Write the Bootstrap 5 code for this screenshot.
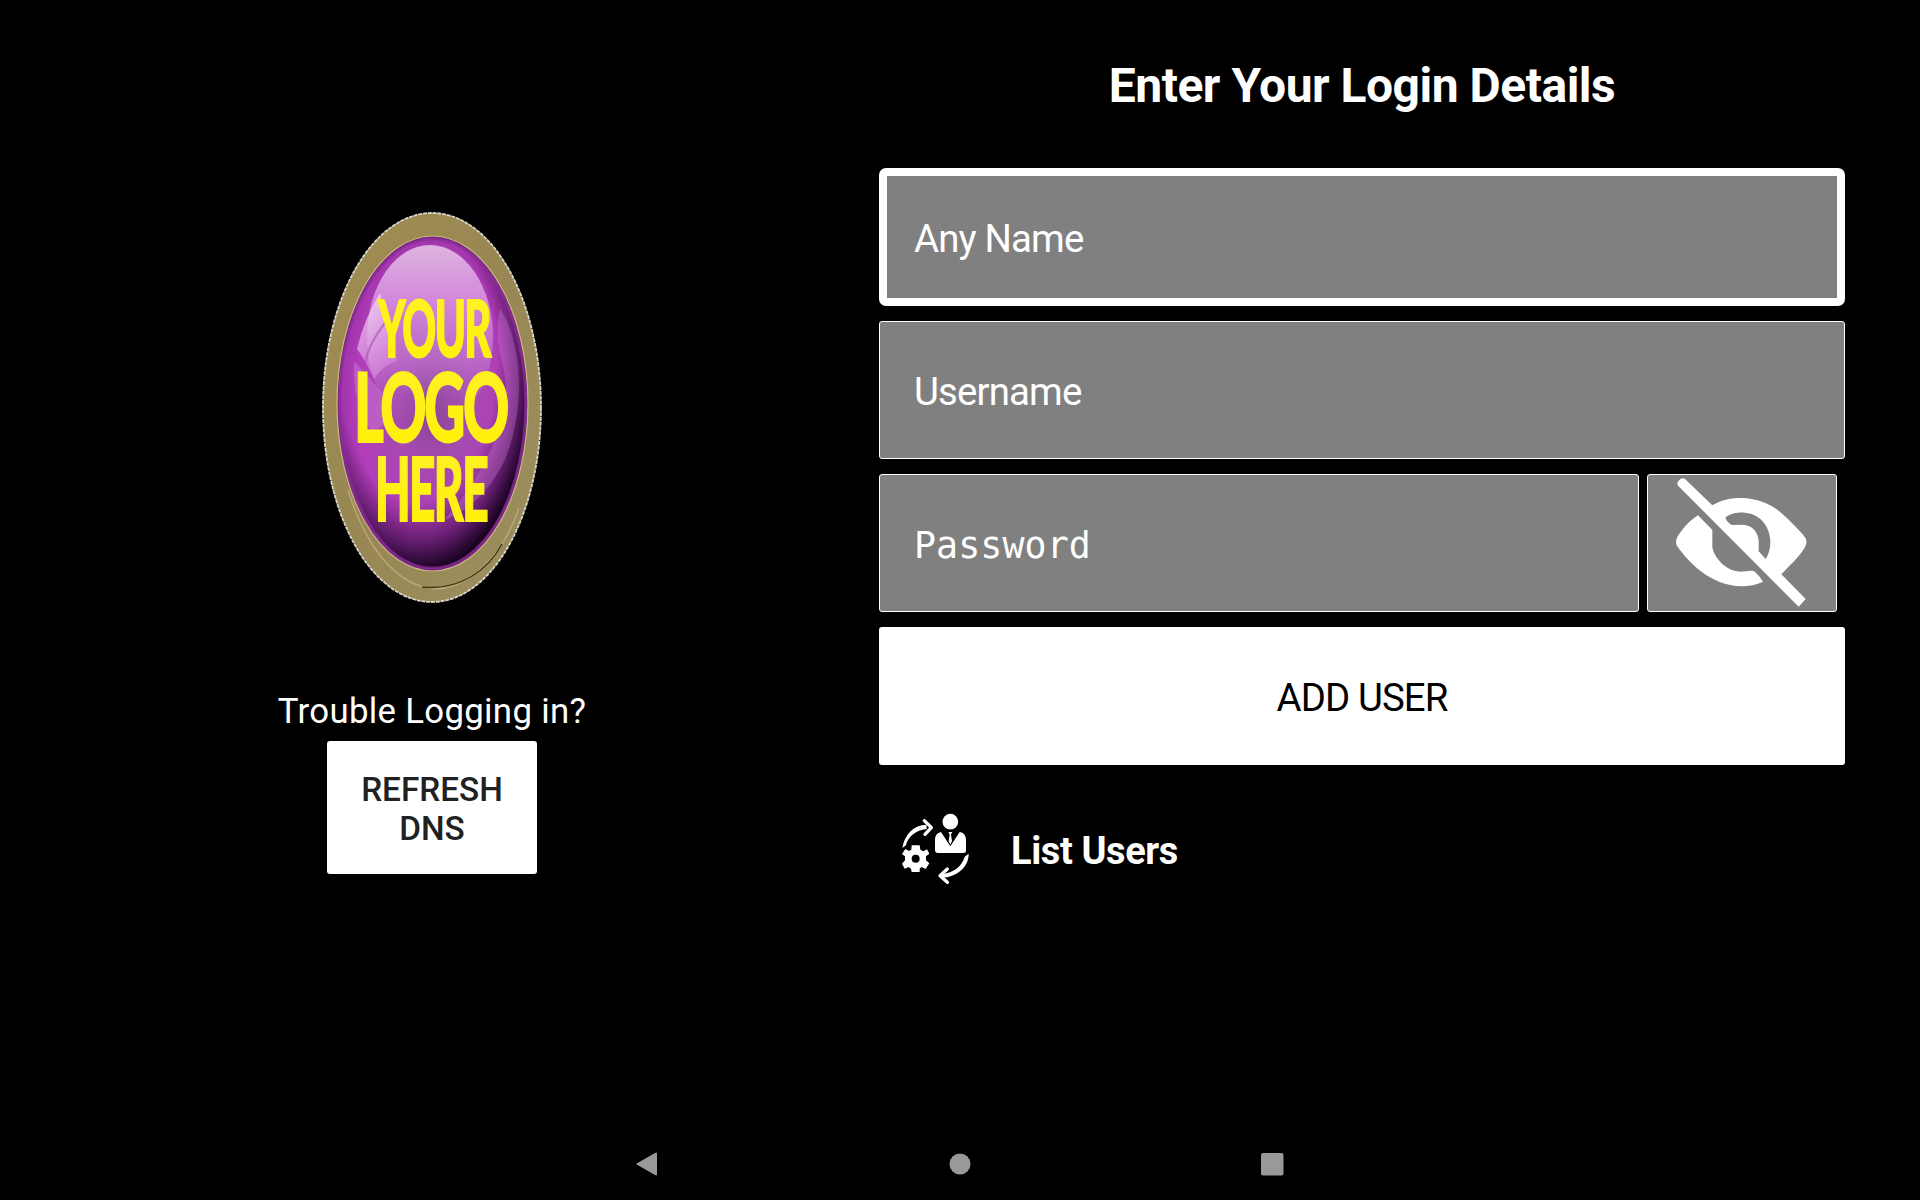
<!DOCTYPE html>
<html lang="en">
<head>
<meta charset="utf-8">
<meta name="viewport" content="width=device-width, initial-scale=1">
<title>Login</title>
<link href="https://cdn.jsdelivr.net/npm/bootstrap@5.3.0/dist/css/bootstrap.min.css" rel="stylesheet">
<style>
body{font-family:Roboto,"Noto Sans",sans-serif;background:#000;color:#fff;height:1200px;overflow:hidden}
.brand-pane{width:864px;padding-top:208px}
.form-pane{padding:0 75px 0 15px}
.brand-logo{width:224px;height:400px}
.trouble{font-size:34.8px;line-height:42px;margin-top:82px;white-space:nowrap;letter-spacing:.3px}
.btn-refresh,.btn-refresh:hover{width:210px;height:133px;margin-top:9px;padding:2px 20px 0;background:#fff;color:#212121;border:0;border-radius:3px;font-size:33.3px;font-weight:500;line-height:39px}
.page-title{font-size:48px;line-height:56px;font-weight:700;margin:58px 0 54px;letter-spacing:-.5px}
.fields{gap:15px}
.field,.field:focus{height:138px;background:#808080;border:1px solid #fff;border-radius:3px;color:#fff;font-size:38.4px;line-height:44px;padding:4px 0 0 34px;display:flex;align-items:center;box-shadow:none;letter-spacing:-.85px}
.field.is-focused{border:8px solid #fff;border-radius:7px;padding-left:27px}
.field.secret{font-family:"DejaVu Sans Mono",monospace;font-size:36.6px;width:760px;letter-spacing:.1px;padding-top:6px}
.btn-eye,.btn-eye:hover{width:190px;height:138px;background:#808080;border:1px solid #fff;border-radius:3px;padding:0}
.btn-add,.btn-add:hover{height:138px;background:#fff;color:#000;border:0;border-radius:3px;font-size:38.4px;line-height:44px;padding:4px 0 0;letter-spacing:-.9px}
.list-users{margin:45px 0 0 21px;gap:39px;font-size:38px;font-weight:700;letter-spacing:-.4px}
.list-users span{padding-top:6px}
.sysbar{height:72px;padding:0 636px}
</style>
<script src="https://cdn.jsdelivr.net/npm/bootstrap@5.3.0/dist/js/bootstrap.bundle.min.js"></script>
</head>
<body class="d-flex flex-column">
<main class="d-flex flex-grow-1">
  <section class="brand-pane d-flex flex-column align-items-center flex-shrink-0">
    <svg class="brand-logo" viewBox="320 208 224 400" role="img" aria-label="Your logo here">
      <defs>
        <linearGradient id="gold" x1="0" y1="0" x2="1" y2="1"><stop offset="0" stop-color="#a08d50"/><stop offset=".5" stop-color="#988754"/><stop offset="1" stop-color="#9c8f60"/></linearGradient>
        <radialGradient id="gem" cx=".5" cy=".48" r=".56"><stop offset="0" stop-color="#85408f"/><stop offset=".35" stop-color="#a44bb0"/><stop offset=".72" stop-color="#b33dba"/><stop offset="1" stop-color="#8d2d9c"/></radialGradient>
        <radialGradient id="depth" cx=".42" cy=".38" r=".63"><stop offset=".66" stop-color="#190026" stop-opacity="0"/><stop offset=".86" stop-color="#190026" stop-opacity=".5"/><stop offset="1" stop-color="#120018" stop-opacity=".96"/></radialGradient>
        <linearGradient id="gloss" x1="0" y1="0" x2="0" y2="1"><stop offset="0" stop-color="#deb4e0"/><stop offset=".3" stop-color="#d58bdd" stop-opacity=".95"/><stop offset=".65" stop-color="#c47ad2" stop-opacity=".6"/><stop offset="1" stop-color="#ad50bb" stop-opacity="0"/></linearGradient>
        <linearGradient id="shine" x1="0" y1="0" x2=".6" y2="1"><stop offset="0" stop-color="#fff" stop-opacity=".7"/><stop offset="1" stop-color="#e79de9" stop-opacity=".4"/></linearGradient>
        <linearGradient id="lemon" x1="0" y1="0" x2="0" y2="1"><stop offset="0" stop-color="#fff22e"/><stop offset="1" stop-color="#fff000"/></linearGradient>
        <clipPath id="gemclip"><ellipse cx="432.5" cy="403.5" rx="94" ry="165.5"/></clipPath>
      </defs>
      <ellipse cx="432" cy="407.5" rx="109" ry="194.5" fill="url(#gold)" stroke="#d8d5c8" stroke-width="1.8" stroke-dasharray="4 .8"/>
      <path d="M348 490C370 560 405 588 437 589C475 586 505 550 519 508" fill="none" stroke="#b6a874" stroke-width="1.5"/>
      <path d="M422 587C460 591 488 570 502 544" fill="none" stroke="#40351a" stroke-width="1.4"/>
      <ellipse cx="432.5" cy="403.5" rx="95.5" ry="167.5" fill="#752382" stroke="#cbb883" stroke-width="1.2"/>
      <ellipse cx="432.5" cy="403.5" rx="94" ry="165.5" fill="url(#gem)"/>
      <g clip-path="url(#gemclip)">
        <ellipse cx="432.5" cy="403.5" rx="94" ry="165.5" fill="url(#depth)"/>
        <path d="M500 308C523 345 526 410 504 462C487 494 467 512 444 520C475 485 503 440 506 390C506 360 492 350 500 308Z" fill="#d087df" opacity=".3"/>
        <ellipse cx="430" cy="337" rx="63" ry="92" fill="url(#gloss)"/>
        <path d="M380 293L397 361Q383 365 374 379Q366 361 357 349Q364 319 380 293Z" fill="url(#shine)"/>
        <path d="M354 361L380 390L392 420L372 432Q352 405 354 361Z" fill="#e7b0ec" opacity=".25"/>
        <path d="M389 318Q367 345 366 362" fill="none" stroke="#aa55b3" stroke-width="2" opacity=".65"/>
      </g>
      <ellipse cx="432.5" cy="403.5" rx="93" ry="164.5" fill="none" stroke="#8b2c95" stroke-width="2.5" opacity=".8"/>
      <g fill="url(#lemon)" stroke="#fff11a" stroke-width="1.8" font-family="Lato, sans-serif" font-weight="900">
        <text x="378" y="357" font-size="78" textLength="112" lengthAdjust="spacingAndGlyphs" letter-spacing="-3">YOUR</text>
        <text x="354" y="442" font-size="95" textLength="153" lengthAdjust="spacingAndGlyphs" letter-spacing="-4">LOGO</text>
        <text x="375" y="521" font-size="87" textLength="112" lengthAdjust="spacingAndGlyphs" letter-spacing="-3">HERE</text>
      </g>
    </svg>
    <div class="trouble">Trouble Logging in?</div>
    <button type="button" class="btn btn-refresh">REFRESH DNS</button>
  </section>
  <section class="form-pane flex-grow-1">
    <h1 class="page-title text-center">Enter Your Login Details</h1>
    <div class="fields d-flex flex-column">
      <div class="form-control field is-focused" role="textbox">Any Name</div>
      <div class="form-control field" role="textbox">Username</div>
      <div class="d-flex gap-2">
        <div class="form-control field secret" role="textbox">Password</div>
        <button type="button" class="btn btn-eye d-flex" aria-label="Show password">
          <svg width="188" height="136" viewBox="54 45 564 408" fill="#fff">
            <path d="M204 166L247 210V262C252 290 284 333 330 335C347 335 360 330 370 333C380 338 392 354 399 365C380 374 355 379 335 379C240 378 173 303 144 262Q132 246 144 228C160 203 180 181 204 166Z"/>
            <path fill-rule="evenodd" d="M247 136C275 119 305 114 335 114C380 115 418 132 442 149C470 172 497 199 520 225Q537 244 523 265C507 291 480 316 454 343L527 417L506 440L144 77Q139 69 147 61Q156 51 165 57ZM286 173C300 160 325 157 345 158C395 162 421 205 421 245Q421 275 407 297L386 274V240C382 213 365 194 335 194L306 195Q292 188 286 173Z"/>
          </svg>
        </button>
      </div>
      <button type="button" class="btn btn-add">ADD USER</button>
    </div>
    <div class="list-users d-flex align-items-center">
      <svg width="72" height="76" viewBox="90 60 216 228" fill="#fff">
        <circle cx="241" cy="95" r="23.5"/>
        <path d="M213 126Q195 129 195 150V180Q195 189 204 189H280Q289 189 288 180V150Q287 128 269 126L241 169Z"/>
        <path d="M235 126H247L243 134L246 153L241 164L236 153L239 134Z"/>
        <path d="M97 174C104 132 132 105 169 104L170 117C137 120 113 141 108 166Z"/>
        <path d="M163 92L184 113L165 133M232 237L210 257L232 277" fill="none" stroke="#fff" stroke-width="10" stroke-linecap="round" stroke-linejoin="round"/>
        <path d="M296 191C297 228 263 262 214 263V252C252 249 277 227 284 200Z"/>
        <path fill-rule="evenodd" d="M125 166H149L151 179L160 184L171 178L178 191L168 199V211L178 220L167 237L155 231L149 236V246H125L123 236L116 231L104 236L96 221L105 211V199L96 192L106 177L117 183L124 179ZM137 194A12 12 0 1 0 137 218A12 12 0 1 0 137 194Z"/>
      </svg>
      <span>List Users</span>
    </div>
  </section>
</main>
<nav class="sysbar d-flex justify-content-between align-items-center flex-shrink-0">
  <svg width="22" height="24" viewBox="0 0 22 24"><path d="M20 1.5V22.5L1.5 12Z" fill="#999" stroke="#999" stroke-width="2" stroke-linejoin="round"/></svg>
  <svg width="22" height="22" viewBox="0 0 22 22"><circle cx="11" cy="11" r="10.5" fill="#999"/></svg>
  <svg width="23" height="23" viewBox="0 0 23 23"><rect width="22.5" height="22.5" rx="2" fill="#999"/></svg>
</nav>
</body>
</html>
